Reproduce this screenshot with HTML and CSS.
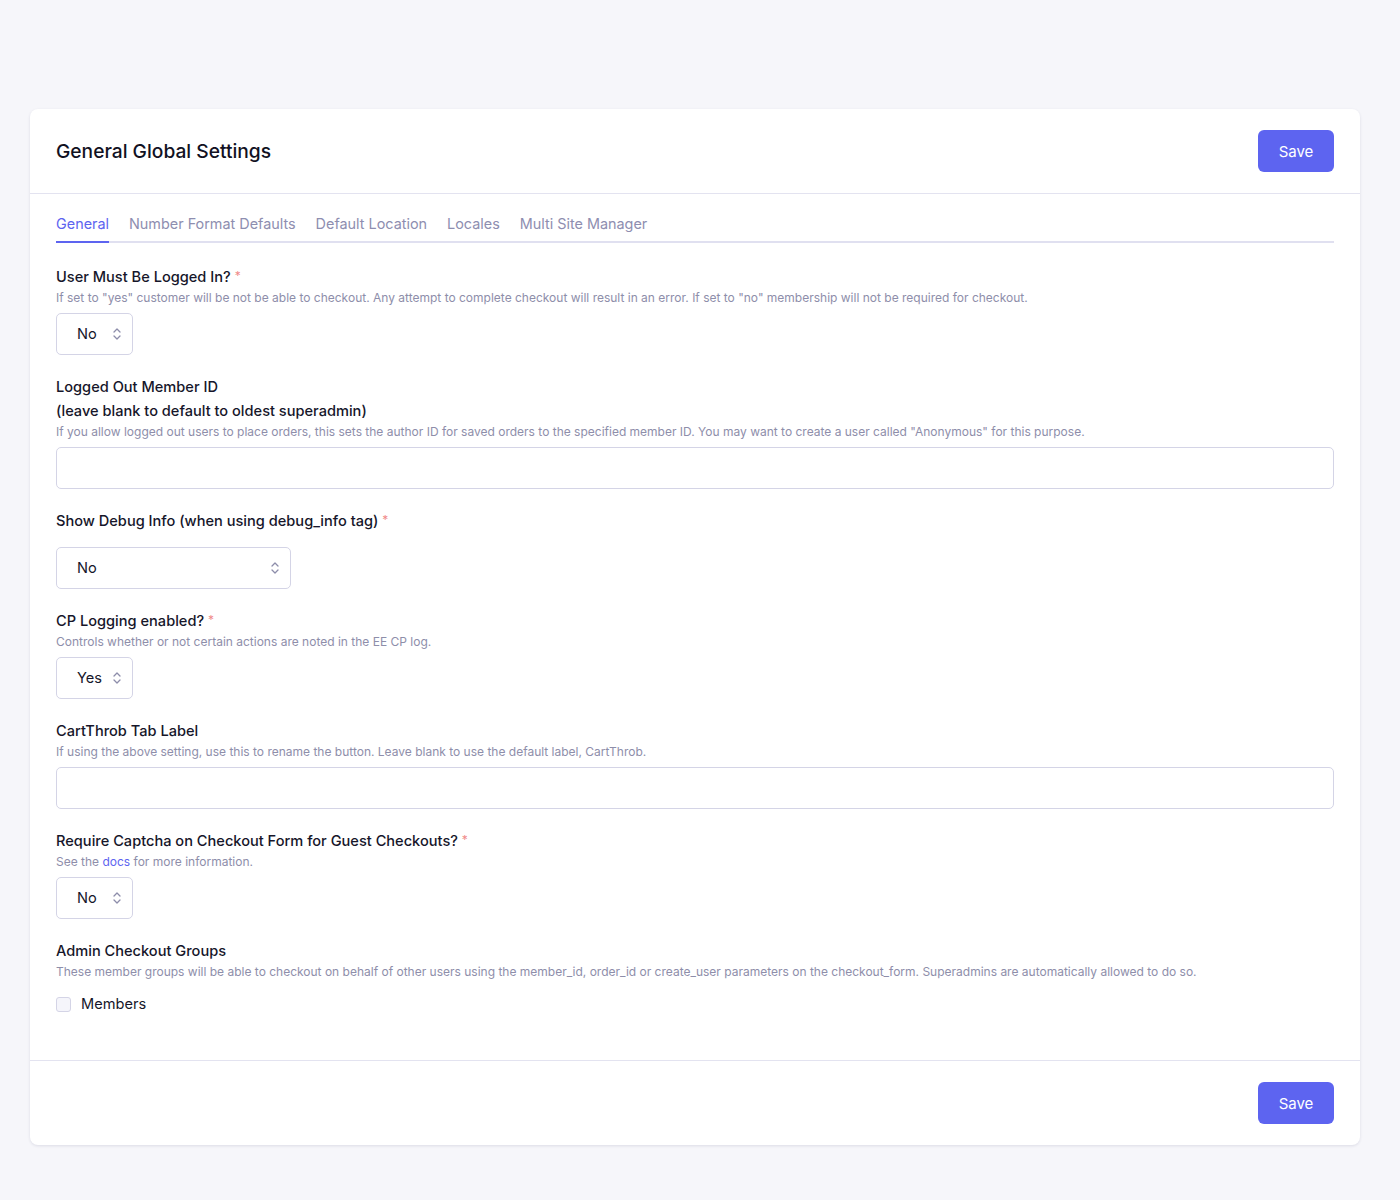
FILE: index.html
```html
<!DOCTYPE html>
<html lang="en">
<head>
  <meta charset="UTF-8">
  <title>General Global Settings</title>
  <link rel="stylesheet" href="styles.css">
</head>
<body>
  <div class="page">
    <div class="card">
      <div class="card-header">
        <h1>General Global Settings</h1>
        <button class="btn">Save</button>
      </div>

      <div class="card-body">
        <nav class="tabs">
          <a class="tab active">General</a>
          <a class="tab">Number Format Defaults</a>
          <a class="tab">Default Location</a>
          <a class="tab">Locales</a>
          <a class="tab">Multi Site Manager</a>
        </nav>

        <div class="field">
          <label class="label">User Must Be Logged In? <span class="req">*</span></label>
          <p class="help">If set to "yes" customer will be not be able to checkout. Any attempt to complete checkout will result in an error. If set to "no" membership will not be required for checkout.</p>
          <div class="select small">
            <span>No</span>
            <svg width="10" height="14" viewBox="0 0 10 14"><path d="M2 5l3-3 3 3M2 9l3 3 3-3" fill="none" stroke="#8d8daa" stroke-width="1.3" stroke-linecap="round" stroke-linejoin="round"/></svg>
          </div>
        </div>

        <div class="field">
          <label class="label">Logged Out Member ID<br>(leave blank to default to oldest superadmin)</label>
          <p class="help">If you allow logged out users to place orders, this sets the author ID for saved orders to the specified member ID. You may want to create a user called "Anonymous" for this purpose.</p>
          <input class="text-input" type="text">
        </div>

        <div class="field">
          <label class="label">Show Debug Info (when using debug_info tag) <span class="req">*</span></label>
          <div class="select wide no-help">
            <span>No</span>
            <svg width="10" height="14" viewBox="0 0 10 14"><path d="M2 5l3-3 3 3M2 9l3 3 3-3" fill="none" stroke="#8d8daa" stroke-width="1.3" stroke-linecap="round" stroke-linejoin="round"/></svg>
          </div>
        </div>

        <div class="field">
          <label class="label">CP Logging enabled? <span class="req">*</span></label>
          <p class="help">Controls whether or not certain actions are noted in the EE CP log.</p>
          <div class="select small">
            <span>Yes</span>
            <svg width="10" height="14" viewBox="0 0 10 14"><path d="M2 5l3-3 3 3M2 9l3 3 3-3" fill="none" stroke="#8d8daa" stroke-width="1.3" stroke-linecap="round" stroke-linejoin="round"/></svg>
          </div>
        </div>

        <div class="field">
          <label class="label">CartThrob Tab Label</label>
          <p class="help">If using the above setting, use this to rename the button. Leave blank to use the default label, CartThrob.</p>
          <input class="text-input" type="text">
        </div>

        <div class="field">
          <label class="label">Require Captcha on Checkout Form for Guest Checkouts? <span class="req">*</span></label>
          <p class="help">See the <a class="link">docs</a> for more information.</p>
          <div class="select small">
            <span>No</span>
            <svg width="10" height="14" viewBox="0 0 10 14"><path d="M2 5l3-3 3 3M2 9l3 3 3-3" fill="none" stroke="#8d8daa" stroke-width="1.3" stroke-linecap="round" stroke-linejoin="round"/></svg>
          </div>
        </div>

        <div class="field last">
          <label class="label">Admin Checkout Groups</label>
          <p class="help">These member groups will be able to checkout on behalf of other users using the member_id, order_id or create_user parameters on the checkout_form. Superadmins are automatically allowed to do so.</p>
          <label class="check">
            <span class="box"></span>
            Members
          </label>
        </div>
      </div>

      <div class="card-footer">
        <button class="btn">Save</button>
      </div>
    </div>
  </div>
</body>
</html>
```

FILE: styles.css
```css
body {
  margin: 0;
  background-color: #f6f6fa;
  color: #16162a;
  font-family: Inter, "Noto Sans", sans-serif;
  font-size: 14.6px;
}

.page {
  padding: 109px 40px 55px 30px;
}

.card {
  background-color: #ffffff;
  border-radius: 8px;
  box-shadow: 0 1px 3px rgba(40, 40, 90, 0.12);
}

.card-header {
  display: flex;
  justify-content: space-between;
  align-items: center;
  padding: 21px 26px;
  border-bottom: 1px solid #e3e3f0;
}

.card-footer {
  display: flex;
  justify-content: flex-end;
  padding: 21px 26px;
  border-top: 1px solid #e3e3f0;
}

h1 {
  margin: 0;
  font-size: 19.2px;
  font-weight: 500;
  color: #111122;
}

.btn {
  background-color: #5d64f0;
  color: #ffffff;
  border: none;
  border-radius: 6px;
  height: 42px;
  width: 76px;
  font-family: inherit;
  font-size: 15px;
  cursor: pointer;
}

.card-body {
  padding: 20px 26px 44px;
}

.tabs {
  display: flex;
  gap: 20px;
  border-bottom: 2px solid #e0e0f0;
  margin-bottom: 22px;
}

.tab {
  color: #8e8eb0;
  font-size: 14.4px;
  line-height: 20px;
  padding-bottom: 7px;
  margin-bottom: -2px;
  border-bottom: 2px solid transparent;
}

.tab.active {
  color: #5d64f0;
  border-bottom-color: #5d64f0;
}

.field {
  margin-bottom: 20px;
}

.field.last {
  margin-bottom: 0;
}

.label {
  display: block;
  font-weight: 500;
  line-height: 24px;
}

.req {
  color: #f08a8a;
  font-size: 12px;
  font-weight: 400;
  line-height: 1;
  vertical-align: top;
  position: relative;
  top: 5px;
}

.help {
  margin: 0 0 6px;
  font-size: 12px;
  line-height: 18px;
  color: #8e8eaa;
}

.link {
  color: #5d64f0;
}

.select {
  display: flex;
  align-items: center;
  justify-content: space-between;
  box-sizing: border-box;
  height: 42px;
  padding: 0 10px 0 20px;
  border: 1px solid #d4d4e6;
  border-radius: 5px;
  color: #16162a;
}

.select.small {
  width: 77px;
}

.select.wide {
  width: 235px;
}

.select.no-help {
  margin-top: 14px;
}

.text-input {
  display: block;
  box-sizing: border-box;
  width: 100%;
  height: 42px;
  margin: 0;
  border: 1px solid #d4d4e6;
  border-radius: 5px;
}

.check {
  display: flex;
  align-items: center;
  gap: 10px;
  margin-top: 11px;
  line-height: 24px;
}

.box {
  width: 13px;
  height: 13px;
  border: 1px solid #d4d4e6;
  border-radius: 3px;
  background-color: #f5f5fb;
}
```
